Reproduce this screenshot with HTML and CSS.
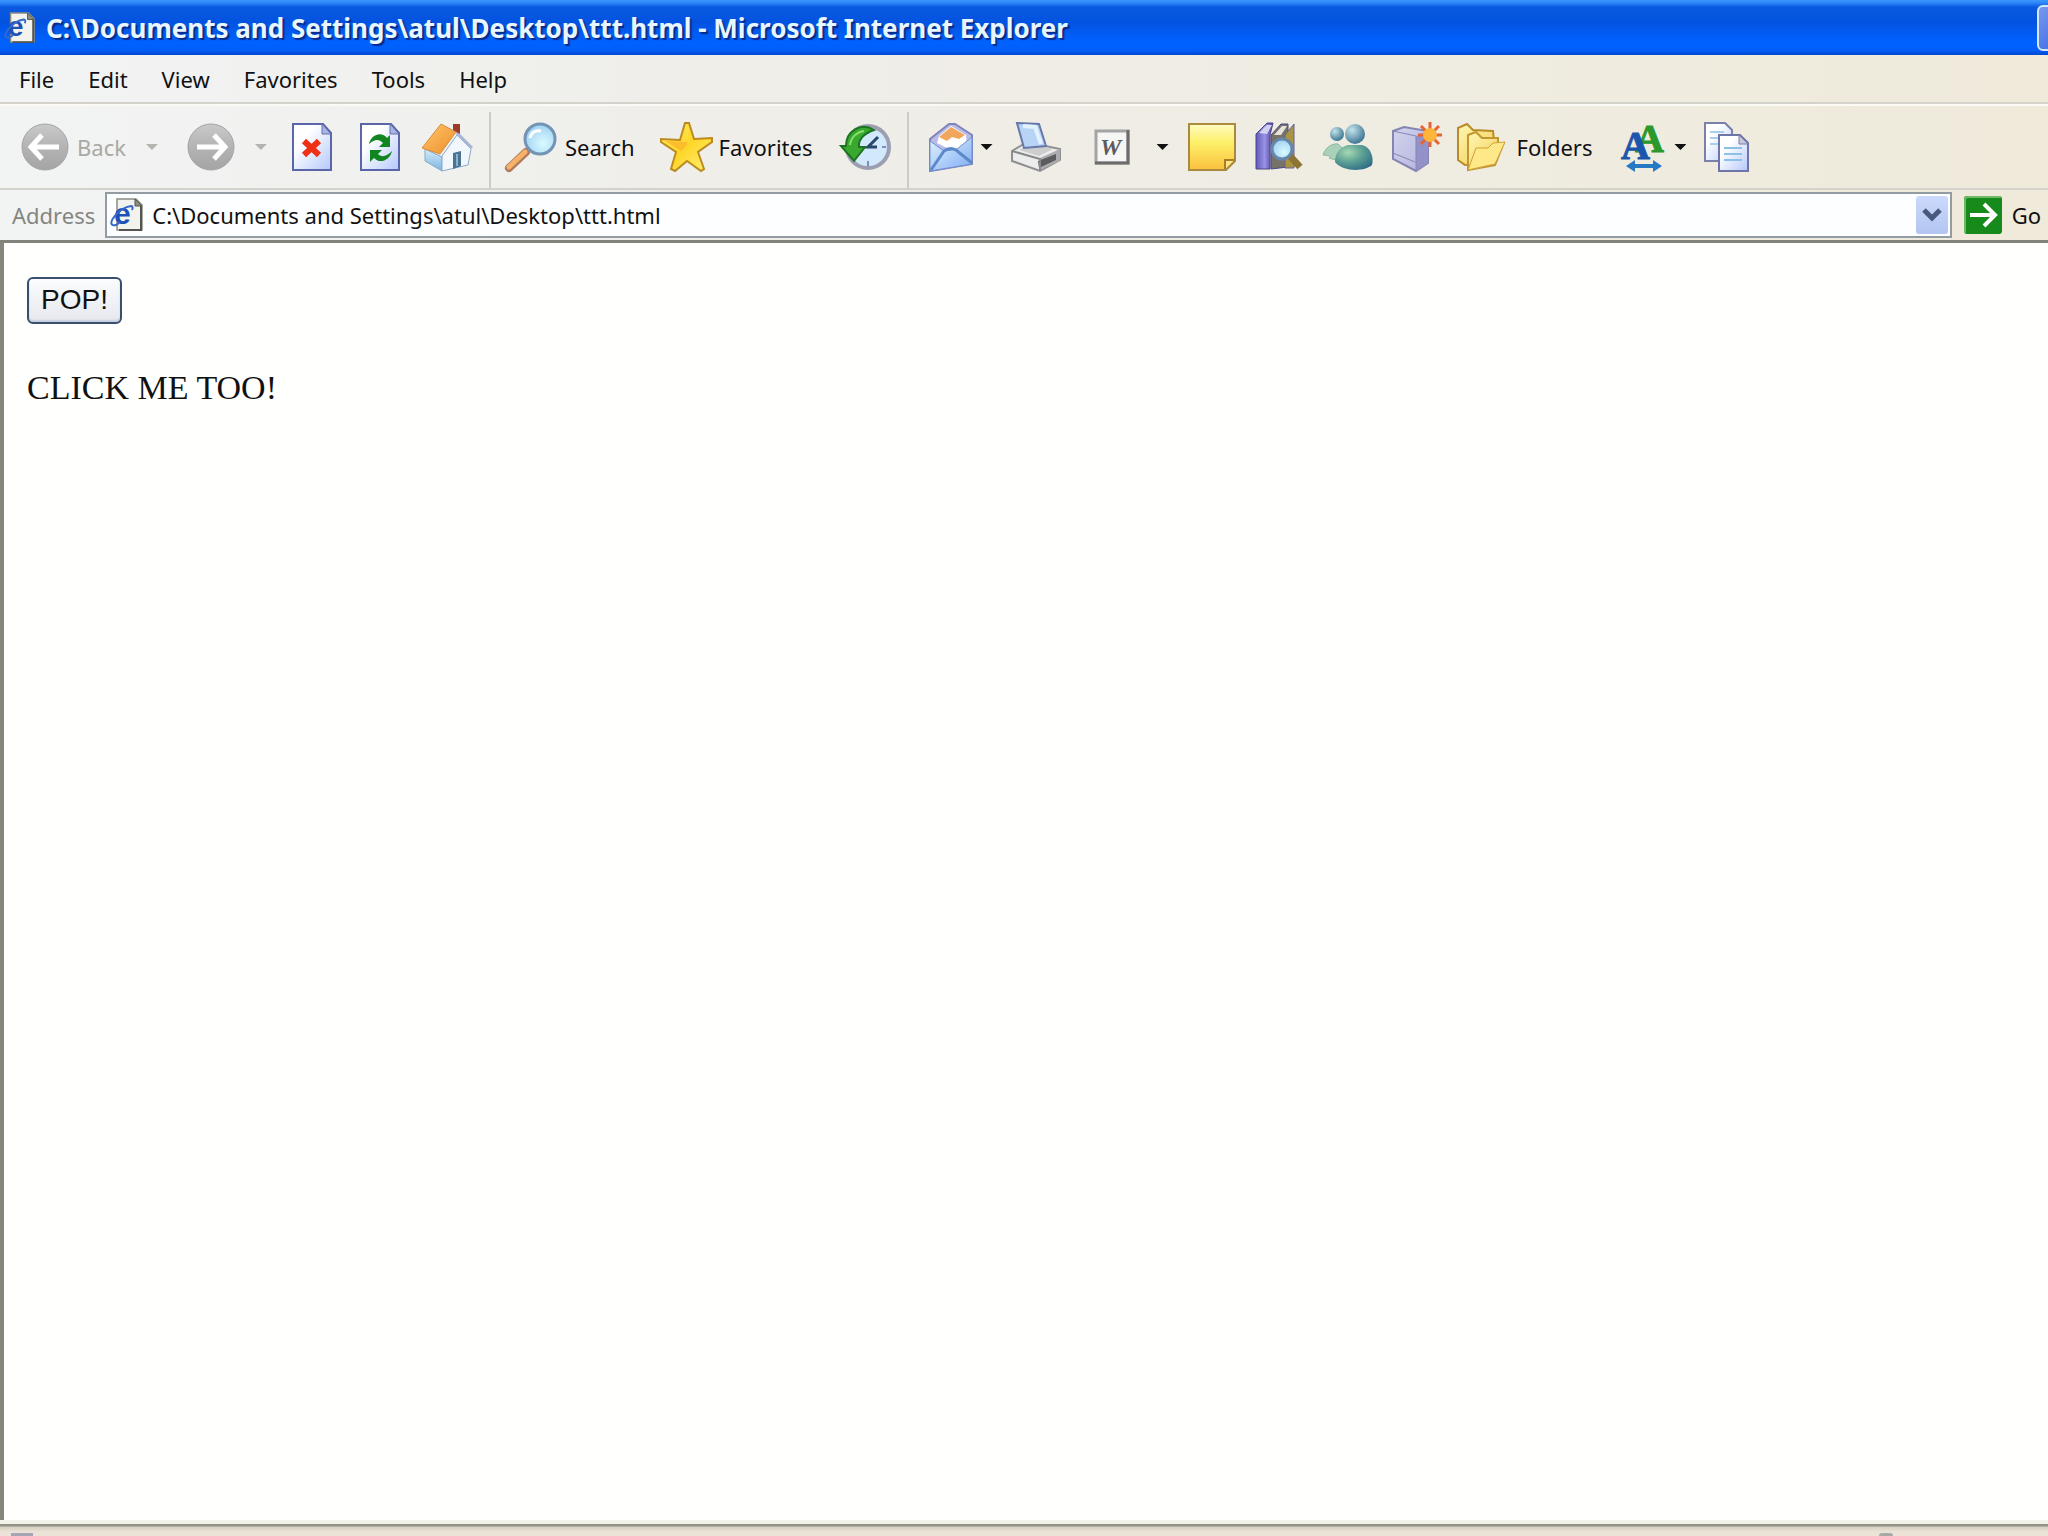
FILE: index.html
```
<!DOCTYPE html>
<html lang="en">
<head>
    <meta charset="UTF-8">
    <meta name="viewport" content="width=device-width, initial-scale=1.0">
    <title>C:\Documents and Settings\atul\Desktop\ttt.html - Microsoft Internet Explorer</title>
    <link rel="stylesheet" href="styles.css">
</head>
<body>
    <!-- Shared shapes -->
    <svg class="defs" aria-hidden="true">
        <defs>
            <linearGradient id="gPage" x1="0" y1="0" x2="1" y2="1"><stop offset="0.3" stop-color="#ffffff"/><stop offset="1" stop-color="#b4c8fb"/></linearGradient>
            <linearGradient id="gGrey" x1="0" y1="0" x2="0" y2="1"><stop offset="0" stop-color="#c9c9c9"/><stop offset="0.5" stop-color="#b4b4b4"/><stop offset="1" stop-color="#a4a4a4"/></linearGradient>
            <linearGradient id="gRoof" x1="0" y1="0" x2="1" y2="1"><stop offset="0" stop-color="#ffc66b"/><stop offset="1" stop-color="#ee8f2c"/></linearGradient>
            <linearGradient id="gWall" x1="0" y1="0" x2="0" y2="1"><stop offset="0" stop-color="#d5ecfa"/><stop offset="1" stop-color="#7cb4e2"/></linearGradient>
            <linearGradient id="gStar" x1="0" y1="0" x2="1" y2="1"><stop offset="0" stop-color="#ffef6e"/><stop offset="0.5" stop-color="#ffd628"/><stop offset="1" stop-color="#fff27a"/></linearGradient>
            <linearGradient id="gNote" x1="0" y1="0" x2="0" y2="1"><stop offset="0" stop-color="#fffbc0"/><stop offset="0.4" stop-color="#fdf06a"/><stop offset="1" stop-color="#fbc13d"/></linearGradient>
            <linearGradient id="gMail" x1="0" y1="0" x2="1" y2="1"><stop offset="0" stop-color="#e4f3ff"/><stop offset="1" stop-color="#7eacf4"/></linearGradient>
            <linearGradient id="gBook" x1="0" y1="0" x2="1" y2="0"><stop offset="0" stop-color="#6058b8"/><stop offset="0.5" stop-color="#9a92e6"/><stop offset="1" stop-color="#4c4496"/></linearGradient>
            <linearGradient id="gBox" x1="0" y1="0" x2="1" y2="1"><stop offset="0" stop-color="#d2d4ee"/><stop offset="1" stop-color="#b3b3dd"/></linearGradient>
            <linearGradient id="gFold" x1="0" y1="0" x2="1" y2="1"><stop offset="0" stop-color="#fff7b4"/><stop offset="1" stop-color="#f3c94c"/></linearGradient>
            <radialGradient id="gLens" cx="0.6" cy="0.65" r="0.7"><stop offset="0" stop-color="#d9fbff"/><stop offset="1" stop-color="#9ccdf2"/></radialGradient>
            <radialGradient id="gBody" cx="0.35" cy="0.3" r="0.8"><stop offset="0" stop-color="#a6d8b2"/><stop offset="0.5" stop-color="#5b9f94"/><stop offset="1" stop-color="#2c6a84"/></radialGradient>
            <radialGradient id="gHead" cx="0.35" cy="0.3" r="0.8"><stop offset="0" stop-color="#c4e4ec"/><stop offset="1" stop-color="#2e6a88"/></radialGradient>
            <symbol id="iePage" viewBox="0 0 34 36">
                <path d="M7 2h19l6 6v25H7z" fill="#f2f3ec" stroke="#8c8c84" stroke-width="1.5"/>
                <path d="M31 9v24H9" fill="none" stroke="#55554f" stroke-width="2"/>
                <path d="M25 2v7h7z" fill="#8d8d86" stroke="#55554f"/>
                <text x="4" y="27" class="ie-letter">e</text>
                <path d="M3 28c-6-1 5-17 18-19 2 0 2 2 1 4M3 28c2 1 5-1 7-3" fill="none" stroke="#3568c8" stroke-width="2"/>
            </symbol>
        </defs>
    </svg>

    <!-- Title Bar -->
    <header class="title-bar">
        <svg class="title-icon" aria-hidden="true"><use href="#iePage"/></svg>
        <h1 class="title-text">C:\Documents and Settings\atul\Desktop\ttt.html - Microsoft Internet Explorer</h1>
        <button class="window-button" aria-label="Minimize"></button>
    </header>

    <!-- Menu Bar -->
    <nav class="menu-bar" aria-label="Menu">
        <button>File</button>
        <button>Edit</button>
        <button>View</button>
        <button>Favorites</button>
        <button>Tools</button>
        <button>Help</button>
    </nav>

    <!-- Standard Buttons -->
    <div class="toolbar" role="toolbar" aria-label="Standard Buttons">
        <button class="tool" disabled>
            <svg class="icon" viewBox="0 0 48 48"><circle cx="24" cy="24" r="23" fill="url(#gGrey)" stroke="#a2a2a2"/><path d="M21 12L10 24l11 12M11 24h27" fill="none" stroke="#fff" stroke-width="5"/></svg>
            <span>Back</span>
        </button>
        <button class="drop" aria-label="Back history" disabled></button>
        <button class="tool after-drop" aria-label="Forward" disabled>
            <svg class="icon" viewBox="0 0 48 48"><circle cx="24" cy="24" r="23" fill="url(#gGrey)" stroke="#a2a2a2"/><path d="M27 12l11 12-11 12M37 24H10" fill="none" stroke="#fff" stroke-width="5"/></svg>
        </button>
        <button class="drop" aria-label="Forward history" disabled></button>
        <button class="tool" aria-label="Stop">
            <svg class="icon" viewBox="0 0 48 48"><path d="M6 1h30l8 9v37H6z" fill="url(#gPage)" stroke="#5b66a8" stroke-width="2"/><path d="M35 1v10h9z" fill="#a9b6e2" stroke="#6470b0"/><path d="M17 18l15 14M32 18L17 32" stroke="#ee3014" stroke-width="6"/></svg>
        </button>
        <button class="tool" aria-label="Refresh">
            <svg class="icon" viewBox="0 0 48 48"><path d="M6 1h30l8 9v37H6z" fill="url(#gPage)" stroke="#5b66a8" stroke-width="2"/><path d="M35 1v10h9z" fill="#a9b6e2" stroke="#6470b0"/><path d="M14 21c2-10 13-13 18-6l3-3v12H24l4-4c-4-4-8-4-14 1zM37 28c-2 10-13 13-18 7l-4 4V27h12l-4 4c4 4 9 2 14-3z" fill="#11851f"/></svg>
        </button>
        <button class="tool" aria-label="Home">
            <svg class="icon" viewBox="0 0 48 48"><path d="M2 26l17 8v14L2 38z" fill="url(#gWall)" stroke="#82abc9"/><path d="M19 33L34 12l14 14-3 16-26 6z" fill="#f2f7fd" stroke="#8daac8"/><path d="M30 30l8-2v15l-8 3z" fill="#4b7193"/><path d="M34 43v-12" stroke="#8cb3cc" stroke-width="2"/><path d="M-1 25L18 1l15 8-16 22z" fill="url(#gRoof)" stroke="#d88b3c"/><path d="M33 9l16 16" stroke="#a9b6d6" stroke-width="3"/><path d="M30 1h7v10l-7-4z" fill="#9c3c28"/></svg>
        </button>
        <span class="divider"></span>
        <button class="tool">
            <svg class="icon" viewBox="0 0 48 48"><path d="M0 45L17 29" stroke="#b2795a" stroke-width="8" stroke-linecap="round"/><path d="M0 44L16 29" stroke="#f4b26b" stroke-width="5" stroke-linecap="round"/><circle cx="31" cy="16" r="15" fill="url(#gLens)" stroke="#7394b4" stroke-width="3"/><path d="M21 15c1-6 6-8 11-7" fill="none" stroke="#fff" stroke-width="3"/></svg>
            <span>Search</span>
        </button>
        <button class="tool after-text">
            <svg class="icon" viewBox="0 0 48 48"><path d="M22 0h4l5 16 18-1v4L35 29l6 17-3 2-14-10-12 10-4-2 5-17L-2 19v-3l19 1z" fill="url(#gStar)" stroke="#bd8a1f" stroke-width="2"/><path d="M24 3v16L2 18l16 10 6-6z" fill="#fbbd2a"/></svg>
            <span>Favorites</span>
        </button>
        <button class="tool after-text" aria-label="History">
            <svg class="icon" viewBox="0 0 48 48"><circle cx="27" cy="24" r="21" fill="#d2e8fb" stroke="#9c9fb2" stroke-width="4"/><path d="M27 6v5M27 38v5M41 24h4" stroke="#7890bb" stroke-width="2"/><path d="M37 14L27 24h9" fill="none" stroke="#28476c" stroke-width="3"/><path d="M33 7C20-1 5 8 5 23H0l13 15 11-14h-6c-1-8 6-14 15-17z" fill="#38a82e" stroke="#1c7420" stroke-width="2"/><path d="M9 22c1-8 7-13 14-14" fill="none" stroke="#86df6d" stroke-width="2"/></svg>
        </button>
        <span class="divider"></span>
        <button class="tool" aria-label="Mail">
            <svg class="icon" viewBox="0 0 48 48"><path d="M3 16L22 1h6l17 11v29L3 48z" fill="#b9bce4" stroke="#8084bc" stroke-width="2"/><path d="M10 20L12 13 24 3l15 9 1 11-14 5z" fill="#fff"/><path d="M12 14L24 4l14 8-6 4-7-2-5 4z" fill="#f2a65c"/><path d="M3 18l14 10 13-2 15-12v27L3 48z" fill="url(#gMail)" stroke="#6d8fd0"/><path d="M4 47l13-19c4-3 8-3 12-1l16 13" fill="none" stroke="#5c8ac8" stroke-width="3"/></svg>
        </button>
        <button class="drop drop-near" aria-label="Mail options"></button>
        <button class="tool" aria-label="Print">
            <svg class="icon" viewBox="0 0 48 48"><path d="M-1 28l15-9 33 7v11L27 48-1 38z" fill="#ececec" stroke="#8f8f92" stroke-width="2"/><path d="M27 35l20-9v12l-20 9z" fill="#acacae"/><path d="M25 38l18-7v6l-17 8z" fill="#5c5c5e"/><path d="M-1 28l28 8v11" fill="none" stroke="#88888a" stroke-width="2"/><path d="M6 27l12-6 22 5-14 7z" fill="#cdcdd0"/><path d="M4 0l22 1 7 22-22 2z" fill="#b7d3f6" stroke="#6878a8" stroke-width="2"/><path d="M10 3l12 1 6 17" fill="none" stroke="#e4f2ff" stroke-width="4"/></svg>
        </button>
        <button class="tool after-print" aria-label="Edit with Word">
            <svg class="icon" viewBox="0 0 48 48"><path d="M7 8h32v32H7z" fill="#f6f6f4" stroke="#a4a4a4" stroke-width="3"/><path d="M39 7v33H6" fill="none" stroke="#6c6c6c" stroke-width="3"/><text x="11" y="32" class="word-letter">W</text></svg>
        </button>
        <button class="drop" aria-label="Edit options"></button>
        <button class="tool" aria-label="Notes">
            <svg class="icon" viewBox="0 0 48 48"><path d="M0 1h46v37l-9 9H0z" fill="url(#gNote)" stroke="#aa8a3c" stroke-width="2"/><path d="M36 46v-9h9" fill="#ffe48a" stroke="#a87c28" stroke-width="2"/></svg>
        </button>
        <button class="tool" aria-label="Research">
            <svg class="icon" viewBox="0 0 48 48"><path d="M-1 11L10 0h6l-3 12v34H-1z" fill="url(#gBook)" stroke="#4b4688"/><path d="M2 10L10 2h5l-5 9z" fill="#d4d1ee"/><path d="M14 12L24 1h7v43l-17 2z" fill="#777268" stroke="#4b4688"/><path d="M17 12l8-9h5l-6 9z" fill="#e6e4da"/><path d="M28 12l9-11v44H28z" fill="#a99540" stroke="#686098"/><path d="M32 32l11 12" stroke="#8d7434" stroke-width="7"/><circle cx="25" cy="26" r="10" fill="url(#gLens)" stroke="#6487aa" stroke-width="3"/></svg>
        </button>
        <button class="tool" aria-label="Messenger">
            <svg class="icon" viewBox="0 0 48 48"><path d="M-2 32c2-7 9-12 15-11l9 8-5 10-13-4c3-2 1-2-6-3z" fill="#a9d1b8" stroke="#8fb8a8"/><circle cx="12" cy="11" r="7" fill="url(#gHead)"/><path d="M10 39c0-9 5-15 13-17h14c9 2 12 13 10 20-8 7-29 7-37-3z" fill="url(#gBody)"/><circle cx="30" cy="11" r="10" fill="url(#gHead)"/></svg>
        </button>
        <button class="tool" aria-label="Messenger package">
            <svg class="icon" viewBox="0 0 48 48"><path d="M0 8l11-4 24 4v32l-12 8L0 36z" fill="url(#gBox)" stroke="#8585b4" stroke-width="2"/><path d="M23 13l12-5v32l-12 8z" fill="#9292c9"/><path d="M0 30l22 9M0 8l23 5v34" fill="none" stroke="#8585b4"/><path d="M37-1v25M25 12h24M28 3l18 18M46 3L28 21" stroke="#e66332" stroke-width="3"/><circle cx="37" cy="12" r="7" fill="#ffb43b"/></svg>
        </button>
        <button class="tool">
            <svg class="icon" viewBox="0 0 48 48"><path d="M-3 5l9-4 6 6 20 1 3 31L4 42l-7-5z" fill="url(#gFold)" stroke="#b88c28" stroke-width="2"/><path d="M7 47V12l8-3 6 6h16v10l5-3-8 20z" fill="url(#gFold)" stroke="#c29730" stroke-width="2"/><path d="M7 47l8-22h12l5-5 12-1-10 22z" fill="#ffe888" stroke="#d0a137"/></svg>
            <span>Folders</span>
        </button>
        <button class="tool after-text" aria-label="Text size">
            <svg class="icon" viewBox="0 0 48 48"><text x="15" y="29" class="size-letter size-back">A</text><text x="1" y="36" class="size-letter">A</text><path d="M6 43l9-6v4h18v-4l9 6-9 6v-4H15v4z" fill="#267ac4"/></svg>
        </button>
        <button class="drop drop-near" aria-label="Text size options"></button>
        <button class="tool" aria-label="Copy">
            <svg class="icon" viewBox="0 0 48 48"><path d="M-1 0h20l7 7v31H-1z" fill="url(#gPage)" stroke="#7b80a6" stroke-width="2"/><path d="M4 9h14M4 15h10M4 21h10" stroke="#a9cfea" stroke-width="2"/><path d="M13 12h21l8 8v28H13z" fill="url(#gPage)" stroke="#6e76a8" stroke-width="2"/><path d="M33 12v9h9z" fill="#c7c8dc" stroke="#7b80a6"/><path d="M18 25h18M18 31h18M18 37h18" stroke="#8cc1e6" stroke-width="2"/></svg>
        </button>
    </div>

    <!-- Address Bar -->
    <form class="address-bar">
        <label for="address">Address</label>
        <div class="address-box">
            <svg class="address-icon" aria-hidden="true"><use href="#iePage"/></svg>
            <input type="text" id="address" value="C:\Documents and Settings\atul\Desktop\ttt.html">
            <button type="button" class="address-drop" aria-label="Show addresses">
                <svg viewBox="0 0 32 38"><path d="M8 14l8 8 8-8" fill="none" stroke="#47597c" stroke-width="5"/></svg>
            </button>
        </div>
        <button type="button" class="go">
            <svg viewBox="0 0 38 38"><rect width="38" height="38" rx="3" fill="#178a1c"/><path d="M1 37V4q0-3 3-3h33" fill="none" stroke="#6dbb68" stroke-width="2"/><path d="M6 19h23M20 8l11 11-11 11" fill="none" stroke="#fff" stroke-width="4"/></svg>
            <span>Go</span>
        </button>
    </form>

    <!-- Page -->
    <main class="page">
        <button class="pop" id="pop">POP!</button>
        <p class="click-me" id="clickMe">CLICK ME TOO!</p>
    </main>

    <!-- Status Bar -->
    <footer class="status-bar">
        <span class="status-page"></span>
        <span class="status-zone"></span>
    </footer>
</body>
</html>
```
FILE: styles.css
```
/* Global Styles */
* {
    box-sizing: border-box;
}

body {
    margin: 0;
    height: 100vh;
    display: flex;
    flex-direction: column;
    overflow: hidden;
    background: linear-gradient(to right, #f2f4f4, #efeee9 35%, #efeada);
    color: #111;
    font-family: "Noto Sans", "Open Sans", sans-serif;
    font-size: 22px;
    line-height: 28px;
}

button,
input {
    font: inherit;
    color: inherit;
    margin: 0;
    padding: 0;
    border: none;
    background: none;
}

.defs {
    position: absolute;
    width: 0;
    height: 0;
}

/* Letters inside icons */
.ie-letter {
    font: bold 30px "Liberation Sans", Arial, sans-serif;
    fill: #1e50b8;
}

.word-letter {
    font: italic bold 24px "Liberation Serif", "Times New Roman", serif;
    fill: #5c5c5e;
}

.size-letter {
    font: bold 40px "Liberation Serif", "Times New Roman", serif;
    fill: #1c56ac;
    stroke: #1c56ac;
    stroke-width: 1px;
}

.size-back {
    fill: #2b982c;
    stroke: #2b982c;
}

/* Title Bar */
.title-bar {
    flex: none;
    display: flex;
    align-items: center;
    height: 55px;
    padding-left: 4px;
    overflow: hidden;
    background: linear-gradient(#3d97ff, #2c86f8 3px, #0a59df 7px, #0353e1 22px, #0062ff 42px, #005ffa 50px, #0047d0);
}

.title-icon {
    flex: none;
    width: 32px;
    height: 34px;
}

.title-text {
    flex: 1;
    margin: 0 0 0 10px;
    font-size: 26px;
    font-weight: bold;
    color: #e8f6ff;
    text-shadow: 2px 2px 1px #0a2a88;
    white-space: nowrap;
}

.window-button {
    flex: none;
    width: 44px;
    height: 46px;
    margin-right: -33px;
    border: 2px solid #d3e7ff;
    border-radius: 6px;
    background: linear-gradient(135deg, #7898f0, #2f5fe0);
}

/* Menu Bar */
.menu-bar {
    flex: none;
    display: flex;
    align-items: center;
    gap: 34px;
    height: 49px;
    padding: 0 19px;
    border-bottom: 2px solid #d3d2cb;
}

/* Standard Buttons */
.toolbar {
    flex: none;
    display: flex;
    align-items: center;
    gap: 20px;
    height: 86px;
    padding-left: 21px;
    border-top: 2px solid #fbfaf4;
    border-bottom: 2px solid #d3d2cb;
    white-space: nowrap;
}

.tool {
    flex: none;
    display: flex;
    align-items: center;
    gap: 8px;
}

.tool:disabled {
    color: #a9a9a4;
}

.icon {
    width: 48px;
    height: 48px;
    overflow: visible;
}

.after-text,
.after-print {
    margin-left: 8px;
}

.after-drop {
    margin-left: 9px;
}

.drop {
    flex: none;
    width: 12px;
    height: 48px;
    background: #111;
    clip-path: polygon(0 21px, 100% 21px, 50% 27px);
}

.drop:disabled {
    background: #b5b5b0;
}

.drop-near {
    margin-left: -14px;
}

.divider {
    flex: none;
    align-self: stretch;
    width: 2px;
    margin: 6px -2px 0 -2px;
    background: #cccbc4;
}

/* Address Bar */
.address-bar {
    flex: none;
    display: flex;
    align-items: center;
    height: 50px;
    padding: 2px 7px 2px 12px;
}

.address-bar label {
    color: #85857f;
}

.address-box {
    flex: 1;
    display: flex;
    align-items: center;
    height: 46px;
    margin: 0 12px 0 10px;
    padding: 2px;
    border: 2px solid #929ca2;
    background: #fdfeff;
}

.address-icon {
    flex: none;
    width: 34px;
    height: 36px;
    margin: 0 8px 0 1px;
}

.address-box input {
    flex: 1;
    min-width: 0;
    outline: none;
}

.address-drop {
    flex: none;
    width: 32px;
    height: 38px;
    border-radius: 3px;
    background: linear-gradient(#cbdafc, #b3c5f0);
}

.address-drop svg {
    display: block;
}

.go {
    flex: none;
    display: flex;
    align-items: center;
    gap: 10px;
}

.go svg {
    width: 38px;
    height: 38px;
}

/* Page */
.page {
    flex: 1;
    min-height: 0;
    padding: 34px 23px;
    border-top: 3px solid #82827a;
    border-left: 4px solid #85857c;
    background: #fffffe;
}

.pop {
    display: block;
    height: 47px;
    padding: 0 12px 2px;
    border: 2px solid #38506e;
    border-radius: 6px;
    background: linear-gradient(#fbfcfd, #e6e8ee);
    box-shadow: inset 0 -2px 2px #c5cddf;
    font-family: "Liberation Sans", Arial, sans-serif;
    font-size: 28px;
}

.click-me {
    margin: 44px 0 0;
    font-family: "Liberation Serif", "Times New Roman", serif;
    font-size: 34px;
    line-height: 40px;
}

/* Status Bar */
.status-bar {
    flex: none;
    display: flex;
    align-items: flex-end;
    justify-content: space-between;
    height: 16px;
    padding: 0 155px 0 11px;
    border-top: 4px solid #f1f2e8;
    background: linear-gradient(#919186, #919186 2px, #d5d1c0 3px, #ebe3d8 8px);
}

.status-page {
    width: 22px;
    height: 3px;
    background: #a5a5b4;
}

.status-zone {
    width: 14px;
    height: 3px;
    border-radius: 3px 3px 0 0;
    background: #a8a8a6;
}
```
